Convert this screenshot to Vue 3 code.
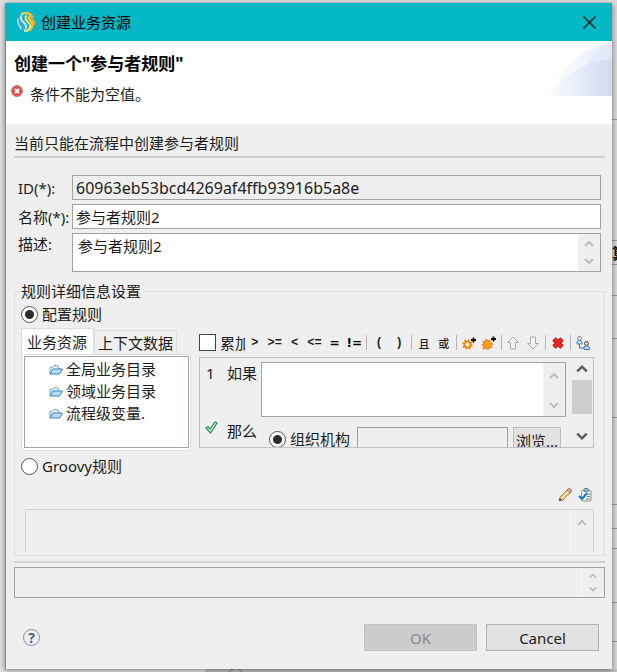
<template>
  <div class="desktop">
    <svg class="symbols" aria-hidden="true">
      <symbol id="up" viewBox="0 0 10 10"><path d="M1 7l4-4 4 4" fill="none" stroke="currentColor" stroke-width="2" /></symbol>
      <symbol id="down" viewBox="0 0 10 10"><path d="M1 3l4 4 4-4" fill="none" stroke="currentColor" stroke-width="2" /></symbol>
      <symbol id="folder" viewBox="0 0 14 11">
        <path d="M1 10V3.500h2L5 1.500l4 .5 1.500 3" fill="#e4f3fd" stroke="#6b9fd0" />
        <path d="M1 10l3-5h9.500l-3 5z" fill="#b5dcf8" stroke="#3f7fbd" />
      </symbol>
    </svg>

    <!-- window behind the dialog -->
    <div class="behind-side">
      <span v-for="y in lines" :key="y" class="line" :style="{ top: y + 'px' }"></span>
      <b class="behind-text">算</b>
    </div>
    <div class="behind-bottom"><span class="behind-ok">OK</span><span class="behind-help">?</span></div>

    <div class="dialog" role="dialog" aria-labelledby="window-title">
      <div class="titlebar">
        <svg class="logo" viewBox="0 0 20 20">
          <g fill="none" stroke-linecap="round">
            <path d="M7 1.500Q13 0 16 4Q11 4 14 8Q19 12 14 18" stroke="#f6c52e" stroke-width="2.400" />
            <path d="M10 4Q8 7 12 10Q17 14 11 19" stroke="#ffe45c" stroke-width="2" />
            <path d="M16 4Q14 5 17 8Q19 10 18 13" stroke="#f2a22a" stroke-width="1.800" />
            <path d="M6 2Q3 6 7 10Q12 13 9 19" stroke="#d8ecfb" stroke-width="2" />
            <path d="M4 3.500Q1 8 5 11.500Q9 14 7 18" stroke="#4a9fe3" stroke-width="1.800" />
            <path d="M2 7Q1 10 3 13Q5 15 5 17" stroke="#b9dcf7" stroke-width="1.600" />
            <path d="M8 5Q8 8 10 11Q13 14 10 18" stroke="#5aa7e0" stroke-width="1" />
          </g>
        </svg>
        <span id="window-title">创建业务资源</span>
        <button class="close" aria-label="关闭">
          <svg viewBox="0 0 13 13"><path d="M.5.5l12 12M12.500.5l-12 12" stroke="#111" stroke-width="1.200" /></svg>
        </button>
      </div>

      <div class="header">
        <h1>创建一个"参与者规则"</h1>
        <p class="error">
          <svg viewBox="0 0 12 12">
            <circle cx="6" cy="6" r="5.500" fill="#d9534f" stroke="#d07573" />
            <path d="M4 4l4 4M8 4l-4 4" stroke="#fff" stroke-width="1.800" />
          </svg>
          <span>条件不能为空值。</span>
        </p>
        <svg class="swoosh" viewBox="0 0 62 55">
          <defs>
            <linearGradient id="fade"><stop offset="0" stop-color="#fcfdff" /><stop offset="1" stop-color="#e6ecf9" /></linearGradient>
            <linearGradient id="fade2"><stop offset="0" stop-color="#fafbfe" /><stop offset="1" stop-color="#cfdbf2" /></linearGradient>
          </defs>
          <path d="M0 55C5 32 30 8 62 0V55z" fill="url(#fade)" />
          <path d="M34 27Q44 10 62 1V18Q46 20 34 27z" fill="#dbe3f5" opacity=".5" />
          <path d="M0 55C14 34 36 21 62 18V55z" fill="url(#fade2)" />
        </svg>
      </div>

      <div class="body">
        <p class="hint">当前只能在流程中创建参与者规则</p>
        <div class="form">
          <label for="rule-id">ID(*):</label>
          <input id="rule-id" class="field code" :value="form.id" readonly />
          <label for="rule-name">名称(*):</label>
          <input id="rule-name" v-model="form.name" class="field" />
          <label for="rule-desc" class="top">描述:</label>
          <div class="area desc">
            <textarea id="rule-desc" v-model="form.desc"></textarea>
            <div class="scroll"><svg><use href="#up" /></svg><svg><use href="#down" /></svg></div>
          </div>
        </div>

        <fieldset>
          <legend>规则详细信息设置</legend>
          <label class="radio"><input v-model="mode" type="radio" value="config" name="mode" />配置规则</label>
          <div class="config">
            <div class="resources">
              <div class="tabs" role="tablist">
                <button
                  v-for="(t, i) in tabs"
                  :key="t"
                  role="tab"
                  :aria-selected="tab === i"
                  :class="{ active: tab === i }"
                  @click="tab = i"
                >{{ t }}</button>
              </div>
              <div class="tree-wrap">
                <ul class="tree">
                  <li v-for="f in folders" :key="f"><svg><use href="#folder" /></svg>{{ f }}</li>
                </ul>
              </div>
            </div>

            <div class="rules">
              <div class="toolbar">
                <label class="check"><input v-model="accumulate" type="checkbox" /><span>累加</span></label>
                <div class="tools">
                  <template v-for="(group, g) in operators" :key="g">
                    <button v-for="op in group" :key="op" class="tool" :class="{ cjk: g === 2, wide: op === '=' || op === '!=' }">{{ op }}</button>
                    <i class="sep"></i>
                  </template>
                  <button class="tool" aria-label="添加条件">
                    <svg viewBox="0 0 14 14">
                      <circle cx="5.500" cy="8.500" r="3" fill="#fff3e2" stroke="#f58a12" stroke-width="2" />
                      <circle cx="5.500" cy="8.500" r="4.500" fill="none" stroke="#ee7d10" stroke-width="1.400" stroke-dasharray="1.700 1.830" />
                      <path d="M11.500 1.500v5M9 4h5" stroke="#111" stroke-width="1.800" />
                    </svg>
                  </button>
                  <button class="tool" aria-label="添加分组">
                    <svg viewBox="0 0 14 14">
                      <path d="M1 5l2 1 1-3 2 2 2-1v3l3 1-2 2 1 2-3-1-1 3-2-2-3 1 1-3-2-1 2-1z" fill="#ffa21c" stroke="#f4780f" />
                      <path d="M11.500.5v5M9 3h5" stroke="#111" stroke-width="1.800" />
                    </svg>
                  </button>
                  <i class="sep"></i>
                  <button class="tool" aria-label="上移">
                    <svg viewBox="0 0 14 14"><path d="M7 1l5.500 5.500h-3V13h-5V6.500h-3z" fill="#f3f3f3" stroke="#aaa" /></svg>
                  </button>
                  <button class="tool" aria-label="下移">
                    <svg viewBox="0 0 14 14"><path d="M7 13l5.500-5.500h-3V1h-5v6.500h-3z" fill="#f3f3f3" stroke="#aaa" /></svg>
                  </button>
                  <i class="sep"></i>
                  <button class="tool" aria-label="删除">
                    <svg viewBox="0 0 14 14">
                      <path d="M3 3l8 8M11 3l-8 8" stroke="#a31a1a" stroke-width="4.800" />
                      <path d="M3 3l8 8M11 3l-8 8" stroke="#ee2222" stroke-width="3" />
                    </svg>
                  </button>
                  <i class="sep"></i>
                  <button class="tool" aria-label="参与者">
                    <svg viewBox="0 0 14 14">
                      <path d="M3.500 8v4h5" fill="none" stroke="#456f9d" />
                      <circle cx="3.500" cy="2.500" r="2" fill="#f1dfc8" stroke="#6d87a3" />
                      <path d="M1 8V6l1-1.500h3L6 6v2z" fill="#b5d8f5" stroke="#4c86bc" />
                      <circle cx="10.500" cy="7.500" r="2" fill="#f0c9a2" stroke="#5a4b3e" />
                      <path d="M8 13.500V11l1-1h3l1.500 1v2.500z" fill="#b5d8f5" stroke="#3976b0" />
                    </svg>
                  </button>
                </div>
              </div>

              <div class="pane">
                <div class="conditions">
                  <div class="row">
                    <span class="mark">1</span>
                    <label for="condition">如果</label>
                    <div class="area">
                      <textarea id="condition" v-model="condition"></textarea>
                      <div class="scroll"><svg><use href="#up" /></svg><svg><use href="#down" /></svg></div>
                    </div>
                  </div>
                  <div class="row then">
                    <span class="mark">
                      <svg class="tick" viewBox="0 0 13 13"><path d="M1 7l2-1.500L5 8l5-7 2 1-6.500 10z" fill="#d4efdc" stroke="#2e8b57" stroke-width="1.200" /></svg>
                    </span>
                    <span class="then-text">那么</span>
                    <div class="target">
                      <label class="radio"><input type="radio" name="target" checked />组织机构</label>
                      <input class="field org" aria-label="组织机构" readonly />
                      <button class="browse">浏览...</button>
                    </div>
                  </div>
                </div>
                <div class="bar">
                  <svg><use href="#up" /></svg>
                  <span class="thumb"></span>
                  <svg><use href="#down" /></svg>
                </div>
              </div>
            </div>
          </div>

          <label class="radio groovy"><input v-model="mode" type="radio" value="groovy" name="mode" />Groovy规则</label>
          <div class="script-tools">
            <button aria-label="编辑">
              <svg viewBox="0 0 14 14">
                <path d="M1 13l1-4 7.500-7.500 3 3L5 12z" fill="#f3c983" stroke="#a88858" />
                <path d="M9 2l1.500-1.500h1.500l1.500 1.500v1.500L12 5z" fill="#d99a92" stroke="#a9635c" stroke-width=".8" />
                <path d="M1 13l1-3 2 2z" fill="#444" />
                <path d="M3.500 10.500l7-7" stroke="#fff0bd" />
              </svg>
            </button>
            <button aria-label="校验">
              <svg viewBox="0 0 14 14">
                <rect x="3.500" y="2.500" width="9.500" height="10.500" rx="1" fill="#eaf3fc" stroke="#a98a60" />
                <rect x="6" y=".5" width="4.500" height="3" rx="1" fill="#9bb8d3" stroke="#5d7f9f" />
                <path d="M9 6h3M9 8.500h3M8 11h4" stroke="#5c8cc0" />
                <path d="M1 8l3 3 5-6" fill="none" stroke="#1676d2" stroke-width="2" />
              </svg>
            </button>
          </div>
          <div class="area script">
            <textarea aria-label="Groovy规则" disabled></textarea>
            <div class="scroll"><svg><use href="#up" /></svg></div>
          </div>
        </fieldset>

        <hr />
        <div class="area message">
          <textarea aria-label="信息" readonly></textarea>
          <div class="scroll"><svg><use href="#up" /></svg><svg><use href="#down" /></svg></div>
        </div>
      </div>

      <div class="footer">
        <button class="help" aria-label="帮助">?</button>
        <button class="btn" disabled>OK</button>
        <button class="btn">Cancel</button>
      </div>
    </div>
  </div>
</template>

<script setup>
import { reactive, ref } from 'vue'

const form = reactive({
  id: '60963eb53bcd4269af4ffb93916b5a8e',
  name: '参与者规则2',
  desc: '参与者规则2'
})
const mode = ref('config')
const tab = ref(0)
const accumulate = ref(false)
const condition = ref('')

const tabs = ['业务资源', '上下文数据']
const folders = ['全局业务目录', '领域业务目录', '流程级变量.']
const operators = [
  ['>', '>=', '<', '<=', '=', '!='],
  ['(', ')'],
  ['且', '或']
]
const lines = [119, 240, 264, 295, 338, 417, 504, 528, 548, 602, 641]
</script>

<style>
body {
  background: #e4e4e4;
}
</style>

<style scoped>
* {
  box-sizing: border-box;
}
.desktop {
  position: relative;
  display: flex;
  min-height: 100vh;
  padding: 3px 5px;
  overflow: hidden;
  color: #1c1c1c;
  font: 15px/22px "Noto Sans", "Noto Sans CJK SC", sans-serif;
}
.symbols {
  position: absolute;
  width: 0;
  height: 0;
}
button,
input,
textarea {
  font: inherit;
  color: inherit;
}
button {
  padding: 0;
  border: none;
  background: none;
}
h1,
p,
ul {
  margin: 0;
  padding: 0;
}
.behind-side {
  position: absolute;
  top: 0;
  right: 0;
  bottom: 0;
  width: 5px;
  background: #dadada;
}
.line {
  position: absolute;
  right: 0;
  width: 5px;
  height: 1px;
  background: #999;
}
.behind-text {
  position: absolute;
  top: 242px;
  left: 0;
}
.behind-bottom {
  position: absolute;
  right: 0;
  bottom: 0;
  width: 412px;
  height: 3px;
  overflow: hidden;
  background: #c2c2c2;
  color: #777;
}
.behind-ok {
  position: absolute;
  right: 5px;
  top: -4px;
}
.behind-help {
  position: absolute;
  top: -1px;
  left: 22px;
  width: 17px;
  border: 1px solid #7080a5;
  border-radius: 9px;
  line-height: 16px;
  text-align: center;
}
.dialog {
  position: relative;
  flex: 1;
  display: flex;
  flex-direction: column;
  min-width: 0;
  border-left: 1px solid #1bb3c2;
  background: #efefef;
  box-shadow: 0 1px 6px rgba(0, 0, 0, 0.5);
}
.titlebar {
  display: flex;
  align-items: center;
  gap: 5px;
  height: 38px;
  padding: 0 16px 0 10px;
  background: #03b7c5;
  color: #000;
}
.logo {
  width: 20px;
  height: 20px;
}
.close {
  display: flex;
  margin-left: auto;
}
.close svg {
  width: 13px;
  height: 13px;
}
.header {
  position: relative;
  height: 83px;
  padding: 12px 8px;
  background: #fff;
}
h1 {
  font-size: 17px;
  line-height: 22px;
  color: #000;
}
.error {
  display: flex;
  gap: 7px;
  margin: 10px 0 0 -3px;
}
.error svg {
  width: 12px;
  height: 12px;
}
.error span {
  line-height: 18px;
}
.swoosh {
  position: absolute;
  top: 0;
  right: 0;
  width: 62px;
  height: 55px;
}
.body {
  padding: 6px 7px 0 8px;
}
.hint {
  line-height: 26px;
  border-bottom: 2px solid #cfcfcf;
}
.form {
  display: grid;
  grid-template-columns: 54px 1fr;
  align-items: center;
  gap: 4px 0;
  padding: 17px 4px 8px 4px;
  white-space: nowrap;
}
.top {
  align-self: start;
}
.field {
  min-width: 0;
  height: 25px;
  padding: 0 3px;
  border: 1px solid #a2a2a2;
  outline: none;
  background: #fff;
}
.field:read-only {
  background: #efefef;
}
.code {
  font-size: 16px;
}
.area {
  display: flex;
  min-width: 0;
  border: 1px solid #a2a2a2;
  background: #fff;
}
.area textarea {
  flex: 1;
  min-width: 0;
  height: 100%;
  padding: 1px 5px;
  border: none;
  outline: none;
  resize: none;
  overflow: hidden;
  background: transparent;
}
.scroll {
  display: flex;
  flex-direction: column;
  justify-content: space-between;
  align-items: center;
  width: 22px;
  padding: 5px 0;
  background: #efefef;
  color: #bdbdbd;
}
.scroll svg {
  width: 10px;
  height: 10px;
}
.desc {
  height: 39px;
}
fieldset {
  min-width: 0;
  margin: 0;
  padding: 0 10px 3px 6px;
  border: 1px solid #dedede;
}
legend {
  padding: 0 2px 0 0;
}
.radio {
  display: flex;
  align-items: center;
  gap: 4px;
  height: 24px;
  white-space: nowrap;
}
input[type="radio"] {
  appearance: none;
  flex: none;
  width: 17px;
  height: 17px;
  margin: 0;
  border: 1px solid #555;
  border-radius: 50%;
  background: #fff;
}
input[type="radio"]:checked {
  background: radial-gradient(circle, #2b2b2b 4px, #fff 5px);
}
.config {
  display: flex;
  gap: 8px;
  padding-top: 2px;
}
.resources {
  flex: 0 0 170px;
}
.tabs {
  display: flex;
  align-items: flex-end;
  height: 26px;
}
.tabs button {
  height: 24px;
  padding: 0 3px;
  border: 1px solid #dedede;
  border-bottom: none;
  line-height: 20px;
  white-space: nowrap;
}
.tabs .active {
  height: 26px;
  padding: 0 6px 0 5px;
  background: #fff;
}
.tree-wrap {
  height: 97px;
  padding: 1px 1px 2px 2px;
  border: 1px solid #dedede;
  background: #fff;
}
.tree {
  height: 100%;
  padding: 1px 0 0 24px;
  border: 1px solid #9ea3ad;
  list-style: none;
}
.tree li {
  display: flex;
  align-items: center;
  gap: 3px;
}
.tree svg {
  width: 14px;
  height: 11px;
}
.rules {
  flex: 1;
  min-width: 0;
}
.toolbar {
  display: flex;
  align-items: center;
  height: 29px;
}
.check {
  display: flex;
  align-items: center;
  gap: 4px;
  width: 46px;
}
.check span {
  width: 27px;
  overflow: hidden;
  white-space: nowrap;
}
input[type="checkbox"] {
  appearance: none;
  flex: none;
  width: 17px;
  height: 17px;
  margin: 0;
  border: 1px solid #444;
  background: #fff;
}
.tools {
  flex: 1;
  display: flex;
  align-items: center;
  padding-right: 1px;
}
.tool {
  flex: 1 1 0;
  min-width: 0;
  display: flex;
  justify-content: center;
  font: bold 12px/16px "Liberation Mono", monospace;
}
.tool.wide {
  font: bold 12px/16px "DejaVu Sans", sans-serif;
  color: #000;
}
.tool.cjk {
  font: 500 11px/16px "Noto Sans CJK SC", sans-serif;
}
.tool svg {
  width: 14px;
  height: 14px;
}
.sep {
  flex: 0 0 5px;
  height: 15px;
  background: linear-gradient(#b4b4b4, #b4b4b4) center / 1px 100% no-repeat;
}
.pane {
  display: flex;
  height: 91px;
  border: 1px solid #bfc1c4;
  overflow: hidden;
}
.conditions {
  flex: 1;
  min-width: 0;
  padding: 4px 5px 0 6px;
}
.row {
  display: flex;
}
.row .area {
  flex: 1;
  height: 55px;
}
.row .scroll {
  padding: 8px 0 6px;
}
.mark {
  width: 21px;
}
.row > label {
  width: 34px;
}
.then {
  align-items: flex-start;
  padding-top: 3px;
}
.tick {
  display: block;
  width: 13px;
  height: 13px;
  margin: 1px 0 0 -1px;
}
.then-text {
  width: 42px;
}
.target {
  flex: 1;
  display: flex;
  min-width: 0;
  padding-top: 7px;
}
.org {
  flex: 1;
  margin: 0 5px 0 7px;
}
.browse {
  width: 48px;
  height: 27px;
  margin-right: 5px;
  border: 1px solid #bcbcbc;
  background: #e1e1e1;
}
.bar {
  display: flex;
  flex-direction: column;
  align-items: center;
  width: 22px;
  color: #5b5b5b;
}
.bar svg {
  width: 12px;
  height: 12px;
  margin: 5px;
}
.thumb {
  width: 20px;
  height: 34px;
  margin-bottom: auto;
  background: #cdcdcd;
}
.groovy {
  margin-top: 3px;
}
.script-tools {
  display: flex;
  justify-content: flex-end;
  gap: 6px;
  height: 31px;
  padding: 10px 2px 0 0;
}
.script-tools button {
  height: 14px;
}
.script-tools svg {
  display: block;
  width: 14px;
  height: 14px;
}
.script {
  height: 43px;
  margin-left: 4px;
  border-color: #d2d2d2;
  border-bottom: none;
  background: #efefef;
}
.script .scroll {
  width: 23px;
  padding: 8px 0;
  border-left: 1px solid #fafafa;
}
hr {
  margin: 5px 0 4px;
  border: none;
  border-top: 2px solid #cfcfcf;
}
.message {
  height: 31px;
  background: #efefef;
}
.message .scroll {
  width: 23px;
  padding: 4px 0;
  border-left: 1px solid #fafafa;
}
.message .scroll svg {
  width: 8px;
  height: 8px;
}
.footer {
  display: flex;
  align-items: center;
  gap: 9px;
  margin-top: auto;
  padding: 20px 13px 18px 17px;
}
.help {
  width: 17px;
  height: 17px;
  margin-right: auto;
  border: 1px solid #7c8bb0;
  border-radius: 50%;
  color: #4c5f90;
  font-weight: bold;
  font-size: 14px;
  line-height: 14px;
}
.btn {
  width: 113px;
  height: 27px;
  border: 1px solid #b2b2b2;
  background: #e1e1e1;
}
.btn:disabled {
  border-color: #c2c2c2;
  background: #cccccc;
  color: #888;
}
</style>
